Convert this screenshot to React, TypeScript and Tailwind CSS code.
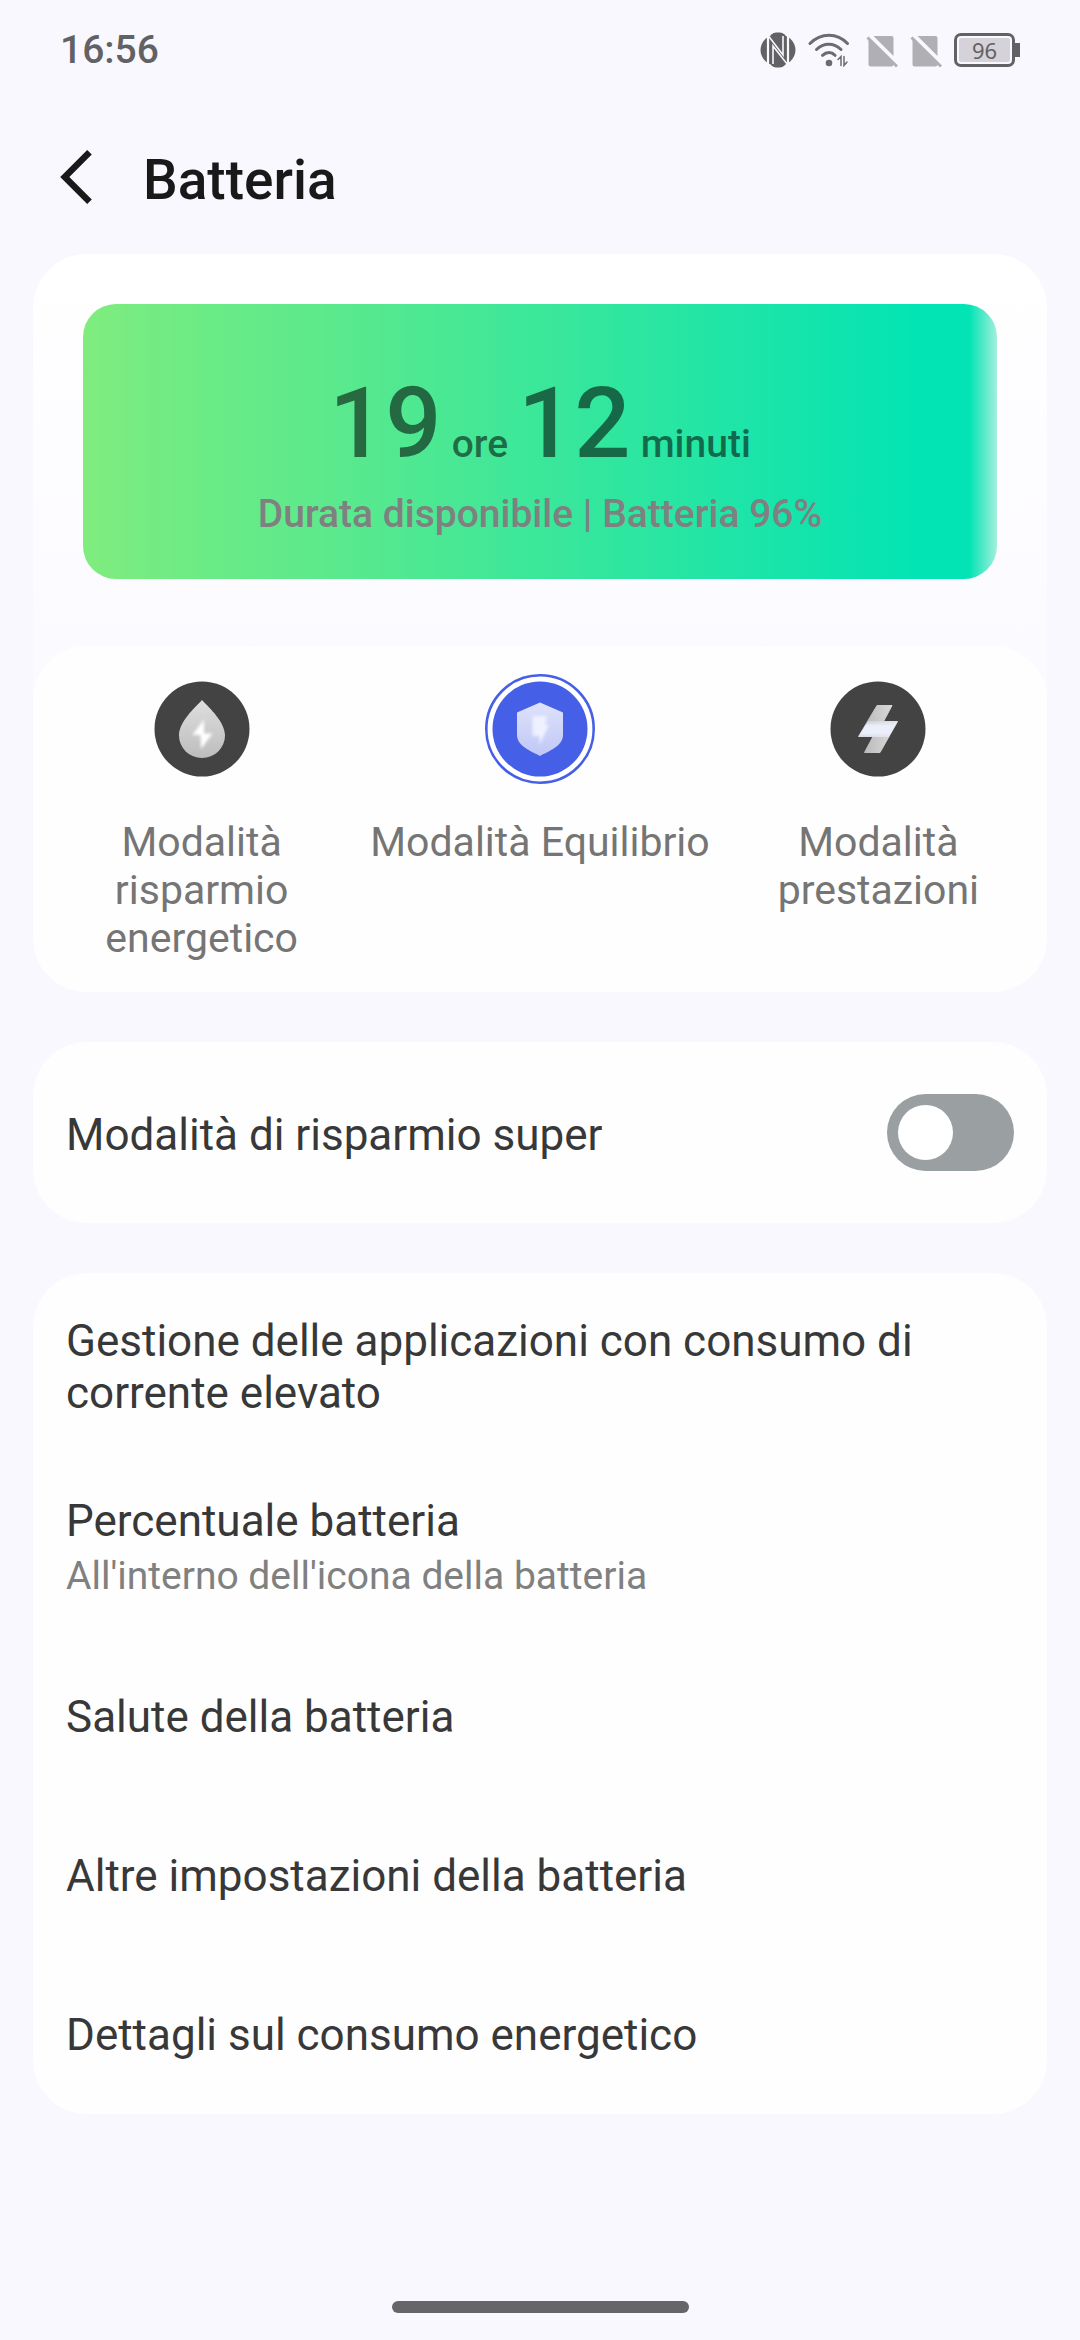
import React, { useState } from 'react';

type Mode = 'saver' | 'balanced' | 'performance';

const modes: { id: Mode; label: string }[] = [
  { id: 'saver', label: 'Modalità risparmio energetico' },
  { id: 'balanced', label: 'Modalità Equilibrio' },
  { id: 'performance', label: 'Modalità prestazioni' },
];

const NfcIcon = () => (
  <svg className="w-9 h-9" viewBox="0 0 36 36">
    <ellipse cx="18" cy="18" rx="17.5" ry="16" fill="#626264" />
    <rect x="10" y="0.5" width="16" height="35" rx="6" fill="#626264" />
    <g stroke="#f9f8ff" fill="none">
      <path d="M8 2v32M28 2v32" strokeWidth="2.200" />
      <path d="M13 32V14L27.500 32.500" strokeWidth="1.600" />
      <path d="M23 4v19L8.500 4" strokeWidth="1.600" />
    </g>
  </svg>
);

const WifiIcon = () => (
  <svg className="w-[42px] h-[34px]" viewBox="0 0 42 34" fill="none" stroke="#6c6c6e" strokeLinecap="round">
    <path d="M2 10.500C13 -.5 29 -.5 39.500 10.500" strokeWidth="3" />
    <path d="M8.500 16.500C15.500 9.500 26 9.500 33 16.500" strokeWidth="3" />
    <path d="M14.500 22.300C18.500 18.700 23.500 18.700 27 22.300" strokeWidth="3" />
    <circle cx="21" cy="30" r="3.300" fill="#6c6c6e" stroke="none" />
    <path d="M30 26.500l3-3v9M36 23.500v9l3-3.500" strokeWidth="1.500" />
  </svg>
);

const NoSimIcon = () => (
  <svg className="w-8 h-8" viewBox="0 0 32 32" fill="#b0afb4">
    <path d="M7.500 0h18q2 0 2 2v18z" />
    <path d="M2.500 3L27.500 28.500q0 2-2 2h-21q-2 0-2-2z" />
    <path d="M1.500 1.500L31 30.500" stroke="#b0afb4" strokeWidth="3" />
  </svg>
);

const SaverIcon = () => (
  <svg className="w-[110px] h-[110px]" viewBox="0 0 110 110">
    <defs>
      <linearGradient id="drop" x1="0" y1="0" x2="0" y2="1">
        <stop offset="0" stopColor="#dedede" />
        <stop offset="1" stopColor="#bdbdbd" />
      </linearGradient>
      <filter id="soft" x="-30%" y="-30%" width="160%" height="160%">
        <feGaussianBlur stdDeviation="1.500" />
      </filter>
    </defs>
    <circle cx="55" cy="55" r="47.500" fill="#434343" />
    <path d="M55 26C63 34.500 78 48 78 61.500a23 22.500 0 0 1-46 0C32 48 47 34.500 55 26z" fill="url(#drop)" />
    <path d="M57 45.500L45.500 61h8L54 75l11.500-15.500H57z" fill="#fff" filter="url(#soft)" />
  </svg>
);

const BalancedIcon = () => (
  <svg className="w-[110px] h-[110px]" viewBox="0 0 110 110">
    <defs>
      <linearGradient id="shield" x1="0" y1="0" x2="0" y2="1">
        <stop offset="0" stopColor="#dfe2fb" />
        <stop offset="1" stopColor="#bfc7f6" />
      </linearGradient>
    </defs>
    <circle cx="55" cy="55" r="53.700" fill="#fff" stroke="#4560e6" strokeWidth="2.600" />
    <circle cx="55" cy="55" r="47.500" fill="#4560e6" />
    <path d="M55 28.500L78 38.500V61c0 11-14 16-23 21-9-5-23-10-23-21V38.500z" fill="url(#shield)" />
    <path d="M47.500 42H62l-1.500 9H64L54.500 71V62h-7z" fill="#eef1ff" filter="url(#soft)" />
  </svg>
);

const PerformanceIcon = () => (
  <svg className="w-[110px] h-[110px]" viewBox="0 0 110 110">
    <defs>
      <linearGradient id="bolt" x1="0" y1="0" x2="1" y2="0">
        <stop offset="0" stopColor="#b4b4b4" />
        <stop offset="1" stopColor="#dedede" />
      </linearGradient>
      <linearGradient id="band" x1="0" y1="0" x2="0" y2="1">
        <stop offset="0" stopColor="#ebeffc" stopOpacity="0.300" />
        <stop offset=".3" stopColor="#ebeffc" />
        <stop offset=".75" stopColor="#ebeffc" />
        <stop offset="1" stopColor="#ebeffc" stopOpacity="0.600" />
      </linearGradient>
    </defs>
    <circle cx="55" cy="55" r="47.500" fill="#434343" />
    <path d="M54 31.500h15L60.500 47.500h14L57 78.500H41.500L50 62.500H35.500z" fill="url(#bolt)" stroke="url(#bolt)" strokeLinejoin="round" />
    <path d="M45 47h29.800L65.500 63H35.200z" fill="url(#band)" />
  </svg>
);

const modeIcons: Record<Mode, React.FC> = {
  saver: SaverIcon,
  balanced: BalancedIcon,
  performance: PerformanceIcon,
};

const StatusBar = () => (
  <div className="h-[100px] px-[60px] flex items-center justify-between text-[#626264]">
    <span className="text-[39px] font-medium">16:56</span>
    <div className="flex items-center">
      <NfcIcon />
      <div className="ml-3"><WifiIcon /></div>
      <div className="ml-4 mt-1"><NoSimIcon /></div>
      <div className="ml-3 mt-1"><NoSimIcon /></div>
      <div className="ml-3 flex items-center">
        <div className="w-[61px] h-[34px] p-[2px] rounded-[7px] border-[3px] border-[#626264]">
          <div className="h-full rounded-xs bg-[#d5d2d9] flex items-center justify-center font-['Noto_Sans'] text-[22px] leading-none">96</div>
        </div>
        <div className="w-[5px] h-3.5 bg-[#626264]"></div>
      </div>
    </div>
  </div>
);

const SettingRow = ({ title, subtitle }: { title: string; subtitle?: string }) => (
  <button className="w-full min-h-[159px] px-[33px] py-[38px] flex flex-col justify-center text-left">
    <span className="text-[44px] leading-[52px]">{title}</span>
    {subtitle && <span className="mt-1.5 text-[39px] leading-[46px] text-[#808080]">{subtitle}</span>}
  </button>
);

const App: React.FC = () => {
  const [mode, setMode] = useState<Mode>('balanced');
  const [superSaver, setSuperSaver] = useState(false);

  return (
    <div className="min-h-screen flex flex-col bg-[#f9f8ff] font-[Roboto,sans-serif] text-[#383838]">
      <StatusBar />

      <header className="h-[154px] px-[60px] flex items-center gap-[51px] text-[#191919]">
        <button aria-label="Indietro">
          <svg className="w-8 h-[54px]" viewBox="0 0 32 54" fill="none" stroke="#191919" strokeWidth="6.500">
            <path d="M29.500 2.300L4.800 27l24.700 24.700" />
          </svg>
        </button>
        <h1 className="pt-1.5 text-[55px] leading-[64px] font-medium">Batteria</h1>
      </header>

      <main className="px-[33px] flex flex-col gap-[50px]">
        <section className="rounded-[54px] bg-linear-to-b from-white to-[#fbfaff] to-55%">
          <div className="px-[50px] pt-[50px] pb-[67px]">
            <div className="h-[275px] pt-[72px] rounded-[33px] flex flex-col items-center bg-linear-[90deg,#80ec7e_0%,#6aeb86_14%,#5de98c_26%,#3be79a_50%,#14e4ac_79%,#02e4b4_92%,#02e4b4_97%,#a4efdd_100%]">
              <p className="flex items-baseline text-black/55 font-medium text-[39px] leading-[94px]">
                <span className="text-[99px]">19</span>
                <span className="mx-2.5">ore</span>
                <span className="text-[99px]">12</span>
                <span className="ml-2.5">minuti</span>
              </p>
              <p className="text-[39px] leading-[46px] font-medium text-[#808080]">Durata disponibile | Batteria 96%</p>
            </div>
          </div>
          <div className="min-h-[346px] py-7 rounded-[54px] bg-[#fefefe] grid grid-cols-[1fr_auto_1fr] items-start">
            {modes.map(({ id, label }) => {
              const Icon = modeIcons[id];
              return (
                <button key={id} onClick={() => setMode(id)} aria-pressed={mode === id} className="flex flex-col items-center">
                  <Icon />
                  <span className="mt-[34px] text-[41px] leading-[48px] text-[#757575]">{label}</span>
                </button>
              );
            })}
          </div>
        </section>

        <section className="h-[181px] px-[33px] rounded-[54px] bg-[#fefefe] flex items-center justify-between">
          <label htmlFor="super-saver" className="pt-1 text-[44px] leading-[52px]">Modalità di risparmio super</label>
          <input
            id="super-saver"
            type="checkbox"
            role="switch"
            checked={superSaver}
            onChange={(e) => setSuperSaver(e.target.checked)}
            className="appearance-none w-[127px] h-[77px] p-[11px] rounded-full bg-[#9a9fa2] before:block before:w-[55px] before:h-[55px] before:rounded-full before:bg-white checked:bg-[#4560e6] checked:before:ml-auto"
          />
        </section>

        <section className="pt-1 rounded-[54px] bg-[#fefefe]">
          <SettingRow title="Gestione delle applicazioni con consumo di corrente elevato" />
          <SettingRow title="Percentuale batteria" subtitle="All'interno dell'icona della batteria" />
          <SettingRow title="Salute della batteria" />
          <SettingRow title="Altre impostazioni della batteria" />
          <SettingRow title="Dettagli sul consumo energetico" />
        </section>
      </main>

      <div className="mt-auto mb-[27px] mx-auto w-[297px] h-3 rounded-full bg-[#666668]"></div>
    </div>
  );
};

export default App;
